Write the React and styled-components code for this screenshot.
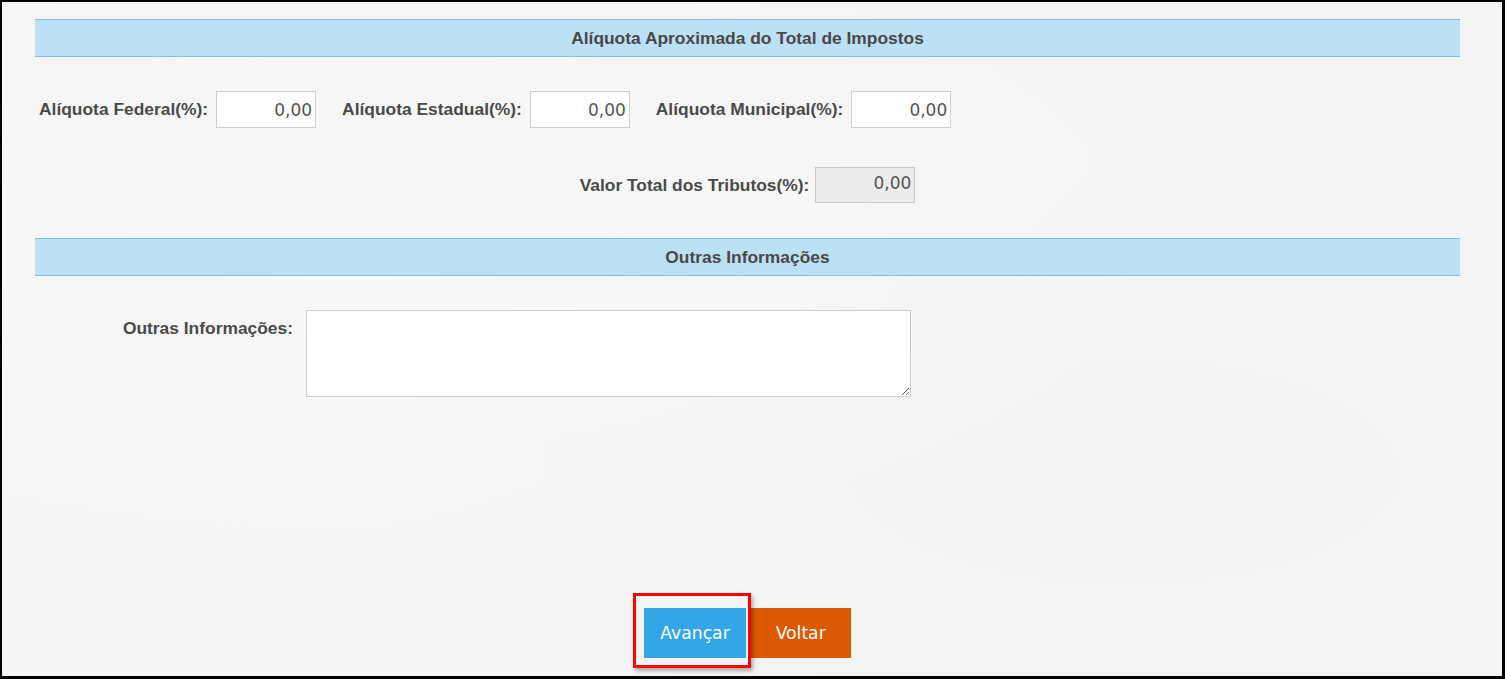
import React from "react";
import styled, { createGlobalStyle } from "styled-components";

const Global = createGlobalStyle`
  html, body { margin: 0; padding: 0; }
  body { background: #f5f5f5; font-family: "Liberation Sans", Arial, sans-serif; }
  * { box-sizing: border-box; }
`;

const Frame = styled.div`
  width: 1505px;
  height: 679px;
  border-style: solid;
  border-color: #000;
  border-width: 2px 3px 3px 2px;
  background:
    radial-gradient(ellipse at 25% 35%, rgba(255,255,255,0.35), transparent 55%),
    radial-gradient(ellipse at 75% 70%, rgba(238,238,238,0.35), transparent 55%),
    #f5f5f5;
  display: flex;
  flex-direction: column;
  padding: 17px 42px 18px 33px;
  overflow: hidden;
`;

const SectionHeader = styled.div`
  height: 38px;
  background: #bde1f4;
  border-top: 1px solid #80c0e8;
  border-bottom: 1px solid #80c0e8;
  display: flex;
  align-items: center;
  justify-content: center;
  font-weight: bold;
  font-size: 17.4px;
  color: #484848;
  margin-top: ${(p) => p.$top || 0}px;
`;

const FieldsRow = styled.div`
  display: flex;
  align-items: center;
  gap: 26px;
  padding-left: 4px;
  margin-top: 34px;
`;

const CenterRow = styled.div`
  display: flex;
  justify-content: center;
  margin-top: 39px;
`;

const Field = styled.div`
  display: flex;
  align-items: center;
  gap: ${(p) => p.$gap || 8}px;
`;

const Label = styled.label`
  font-weight: bold;
  font-size: 17.4px;
  color: #4a4a4a;
  white-space: nowrap;
`;

const NumInput = styled.input`
  width: 100px;
  height: ${(p) => (p.disabled ? 36 : 37)}px;
  border: 1px solid ${(p) => (p.disabled ? "#c9c9c9" : "#cfcfcf")};
  background: ${(p) => (p.disabled ? "#ececec" : "#fff")};
  text-align: right;
  padding: 0 3px ${(p) => (p.disabled ? 5 : 0)}px 0;
  font-family: "DejaVu Sans", Verdana, sans-serif;
  font-size: 17px;
  color: #555;
  outline: none;
  &:disabled { color: #555; -webkit-text-fill-color: #555; opacity: 1; }
`;

const InfoRow = styled.div`
  display: flex;
  align-items: flex-start;
  gap: 13px;
  margin-top: 34px;
`;

const InfoLabel = styled(Label)`
  width: 258px;
  text-align: right;
  padding-top: 8px;
`;

const TextArea = styled.textarea`
  width: 605px;
  height: 87px;
  border: 1px solid #cfcfcf;
  background: #fff;
  font-family: "DejaVu Sans", Verdana, sans-serif;
  font-size: 15px;
  outline: none;
  margin: 0;
`;

const ButtonBar = styled.div`
  margin-top: auto;
  display: flex;
  justify-content: center;
  gap: 5px;
`;

const ButtonWrap = styled.div`
  position: relative;
`;

const Highlight = styled.div`
  position: absolute;
  top: -15px;
  left: -11px;
  right: -5px;
  bottom: -10px;
  border: 3px solid #ff0000;
  box-shadow: 2px 3px 4px rgba(0, 0, 0, 0.3);
  pointer-events: none;
`;

const Button = styled.button`
  height: 50px;
  min-width: 100px;
  padding: 0 16px;
  border: none;
  background: ${(p) => p.$bg};
  color: #fff;
  font-family: "DejaVu Sans", Verdana, sans-serif;
  font-size: 17.2px;
  cursor: pointer;
`;

export default function App() {
  return (
    <>
      <Global />
      <Frame>
        <SectionHeader>Alíquota Aproximada do Total de Impostos</SectionHeader>
        <FieldsRow>
          <Field>
            <Label>Alíquota Federal(%):</Label>
            <NumInput defaultValue="0,00" />
          </Field>
          <Field>
            <Label>Alíquota Estadual(%):</Label>
            <NumInput defaultValue="0,00" />
          </Field>
          <Field>
            <Label>Alíquota Municipal(%):</Label>
            <NumInput defaultValue="0,00" />
          </Field>
        </FieldsRow>
        <CenterRow>
          <Field $gap={6}>
            <Label>Valor Total dos Tributos(%):</Label>
            <NumInput disabled value="0,00" readOnly />
          </Field>
        </CenterRow>
        <SectionHeader $top={35}>Outras Informações</SectionHeader>
        <InfoRow>
          <InfoLabel>Outras Informações:</InfoLabel>
          <TextArea />
        </InfoRow>
        <ButtonBar>
          <ButtonWrap>
            <Button $bg="#32a6e6">Avançar</Button>
            <Highlight />
          </ButtonWrap>
          <Button $bg="#db5900">Voltar</Button>
        </ButtonBar>
      </Frame>
    </>
  );
}
